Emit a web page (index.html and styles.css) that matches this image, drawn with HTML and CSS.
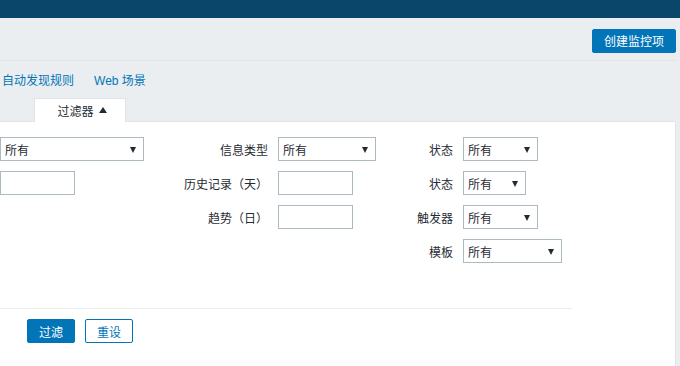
FILE: index.html
```html
<!DOCTYPE html>
<html lang="zh-CN">
<head>
    <meta charset="UTF-8">
    <meta name="viewport" content="width=device-width, initial-scale=1.0">
    <title>监控项</title>
    <link rel="stylesheet" href="styles.css">
</head>
<body>
    <div class="top-bar"></div>

    <div class="main">
        <div class="title-bar">
            <button class="btn btn-primary create-btn">创建监控项</button>
        </div>

        <div class="sub-nav">
            <a href="#">自动发现规则</a>
            <a href="#">Web 场景</a>
        </div>

        <div class="filter-tab">过滤器 <span class="arrow-up"></span></div>

        <div class="filter-panel">
            <div class="filter-form">
                <div class="filter-grid">
                    <!-- 第一行 -->
                    <div class="select w144">所有</div>
                    <label>信息类型</label>
                    <div class="select w98">所有</div>
                    <label>状态</label>
                    <div class="select w75">所有</div>

                    <!-- 第二行 -->
                    <input type="text" class="w75">
                    <label>历史记录（天）</label>
                    <input type="text" class="w75">
                    <label>状态</label>
                    <div class="select w63">所有</div>

                    <!-- 第三行 -->
                    <span></span>
                    <label>趋势（日）</label>
                    <input type="text" class="w75">
                    <label>触发器</label>
                    <div class="select w75">所有</div>

                    <!-- 第四行 -->
                    <span></span>
                    <span></span>
                    <span></span>
                    <label>模板</label>
                    <div class="select w99">所有</div>
                </div>

                <div class="filter-actions">
                    <button class="btn btn-primary">过滤</button>
                    <button class="btn btn-outline">重设</button>
                </div>
            </div>
        </div>
    </div>
</body>
</html>
```

FILE: styles.css
```css
body {
    margin: 0;
    background: #ebeef0;
    color: #1f2c33;
    font-family: 'Liberation Sans', 'Noto Sans CJK SC', sans-serif;
    font-size: 12px;
    overflow: hidden;
    height: 366px;
}

.top-bar {
    height: 18px;
    background: #0a466a;
}

.main {
    margin-right: 4px;
}

.title-bar {
    height: 43px;
    display: flex;
    justify-content: flex-end;
    align-items: center;
    padding-top: 3px;
    box-sizing: border-box;
    border-bottom: 1px solid #dfe4e7;
}

.btn {
    font-family: inherit;
    font-size: 12px;
    height: 24px;
    padding: 0 10px;
    border-radius: 2px;
    cursor: pointer;
    box-sizing: border-box;
}

.btn-primary {
    background: #0275b8;
    border: 1px solid #0275b8;
    color: white;
}

.btn-outline {
    background: white;
    border: 1px solid #0275b8;
    color: #0275b8;
}

.create-btn {
    width: 84px;
    padding: 0;
}

.sub-nav {
    height: 37px;
    display: flex;
    align-items: center;
    gap: 20px;
    padding-left: 2px;
}

.sub-nav a {
    color: #0275b8;
    text-decoration: none;
}

.filter-tab {
    margin-left: 34px;
    width: 92px;
    height: 24px;
    box-sizing: border-box;
    background: white;
    border: 1px solid #dfe4e7;
    border-bottom: none;
    display: flex;
    align-items: center;
    justify-content: center;
    gap: 5px;
    padding-left: 4px;
    position: relative;
    margin-bottom: -1px;
}

.arrow-up {
    width: 0;
    height: 0;
    border-left: 4px solid transparent;
    border-right: 4px solid transparent;
    border-bottom: 6px solid #1f2c33;
    margin-top: -1px;
}

.filter-panel {
    background: white;
    border-top: 1px solid #dfe4e7;
    border-right: 1px solid #dfe4e7;
    padding-top: 15px;
    min-height: 240px;
}

.filter-form {
    width: 572px;
}

.filter-grid {
    display: grid;
    grid-template-columns: 150px 108px 98px 67px 100px;
    grid-auto-rows: 24px;
    column-gap: 10px;
    row-gap: 10px;
    align-items: center;
    justify-items: start;
    padding-bottom: 45px;
    border-bottom: 1px solid #ebeef0;
}

.filter-grid label {
    justify-self: end;
    white-space: nowrap;
}

.select,
.filter-grid input {
    height: 24px;
    box-sizing: border-box;
    border: 1px solid #acbbc2;
    background: white;
}

.select {
    position: relative;
    padding: 2px 0 0 4px;
    line-height: 23px;
}

.select::after {
    content: '';
    position: absolute;
    right: 7px;
    top: 9px;
    border-left: 3px solid transparent;
    border-right: 3px solid transparent;
    border-top: 6px solid #1f2c33;
}

.filter-grid input {
    margin: 0;
    padding: 0 4px;
    font-family: inherit;
    font-size: 12px;
}

.w63 { width: 63px; }
.w75 { width: 75px; }
.w98 { width: 98px; }
.w99 { width: 99px; }
.w144 { width: 144px; }

.filter-actions {
    display: flex;
    gap: 10px;
    padding: 10px 0 0 27px;
}

.filter-actions .btn {
    width: 48px;
    padding: 0;
}
```
